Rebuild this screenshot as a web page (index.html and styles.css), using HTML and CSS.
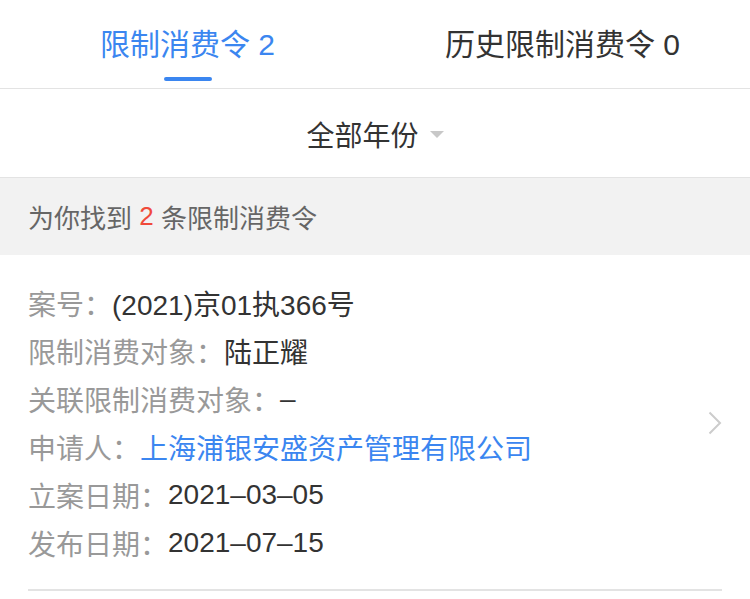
FILE: index.html
```html
<!DOCTYPE html>
<html lang="zh">
<head>
<meta charset="utf-8">
<link rel="stylesheet" href="styles.css">
</head>
<body>
<div class="tabs">
  <div class="tab active"><span class="tab-label">限制消费令 2</span><span class="indicator"></span></div>
  <div class="tab"><span class="tab-label">历史限制消费令 0</span></div>
</div>
<div class="filter">
  <span class="filter-label">全部年份</span><span class="caret"></span>
</div>
<div class="summary">为你找到 <span class="count">2</span> 条限制消费令</div>
<div class="card">
  <div class="rows">
    <div class="row"><span class="label">案号：</span><span class="value">(2021)京01执366号</span></div>
    <div class="row"><span class="label">限制消费对象：</span><span class="value">陆正耀</span></div>
    <div class="row"><span class="label">关联限制消费对象：</span><span class="value">–</span></div>
    <div class="row"><span class="label">申请人：</span><span class="value link">上海浦银安盛资产管理有限公司</span></div>
    <div class="row"><span class="label">立案日期：</span><span class="value">2021–03–05</span></div>
    <div class="row"><span class="label">发布日期：</span><span class="value">2021–07–15</span></div>
  </div>
  <svg class="chevron" width="14" height="24" viewBox="0 0 14 24"><path d="M1.5 1.5 L12 12 L1.5 22.5" fill="none" stroke="#cccccc" stroke-width="2"/></svg>
</div>
</body>
</html>
```

FILE: styles.css
```css
* { box-sizing: border-box; }
body {
  margin: 0;
  background: #fff;
  font-family: "Liberation Sans", "Noto Sans CJK SC", sans-serif;
  color: #333;
}
.tabs {
  display: flex;
  height: 89px;
  border-bottom: 1px solid #e3e3e3;
}
.tab {
  flex: 1;
  display: flex;
  flex-direction: column;
  align-items: center;
}
.tab-label {
  font-size: 30px;
  line-height: 30px;
  margin-top: 30px;
  color: #333;
}
.tab.active .tab-label { color: #3b86f0; }
.indicator {
  width: 48px;
  height: 4px;
  border-radius: 2px;
  background: #3b86f0;
  margin-top: 17px;
}
.filter {
  height: 89px;
  display: flex;
  align-items: center;
  justify-content: center;
  border-bottom: 1px solid #e3e3e3;
  padding-top: 2px;
}
.filter-label {
  font-size: 28px;
  color: #333;
}
.caret {
  width: 0;
  height: 0;
  border-left: 7px solid transparent;
  border-right: 7px solid transparent;
  border-top: 7px solid #c8c8c8;
  margin-left: 11px;
}
.summary {
  background: #f2f2f2;
  height: 77px;
  display: flex;
  align-items: center;
  padding-left: 28px;
  font-size: 26px;
  color: #666;
  white-space: pre;
}
.count { color: #f04a3a; }
.card {
  margin: 0 28px;
  padding: 24px 0 22px;
  border-bottom: 2px solid #e3e3e3;
  display: flex;
  align-items: center;
  justify-content: space-between;
}
.row {
  display: flex;
  height: 48px;
  align-items: center;
  font-size: 28px;
}
.label { color: #999; }
.value { color: #333; }
.value.link { color: #3b86f0; }
.chevron { display: block; }
```
